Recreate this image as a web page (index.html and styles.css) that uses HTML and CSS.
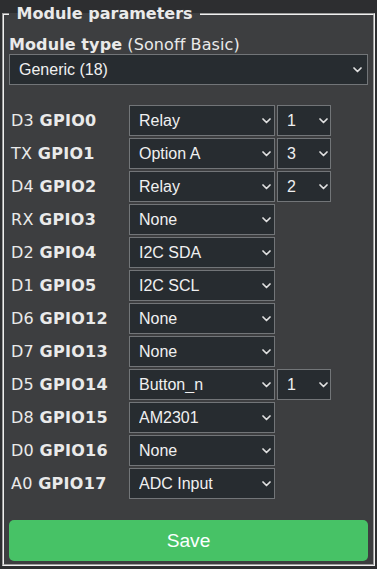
FILE: index.html
```html
<!DOCTYPE html>
<html>
<head>
<meta charset="utf-8">
<link rel="stylesheet" href="styles.css">
</head>
<body>
<div class="page">
  <fieldset class="panel">
    <legend class="panel-title"><b>&nbsp;Module parameters&nbsp;</b></legend>
    <div class="mtype"><b>Module type</b> (Sonoff Basic)</div>
    <div class="sel sel-full">
      <select class="field"><option>Generic (18)</option></select>
      <svg class="chev" width="9" height="6" viewBox="0 0 9 6"><path d="M1 1L4.5 4.5L8 1"/></svg>
    </div>
    <table class="gpio">
      <tr><td class="lbl">D3 <b>GPIO0</b></td><td class="c1"><div class="sel"><select class="field"><option>Relay</option></select><svg class="chev" width="9" height="6" viewBox="0 0 9 6"><path d="M1 1L4.5 4.5L8 1"/></svg></div></td><td class="c2"><div class="sel sel-small"><select class="field"><option>1</option></select><svg class="chev" width="9" height="6" viewBox="0 0 9 6"><path d="M1 1L4.5 4.5L8 1"/></svg></div></td></tr>
      <tr><td class="lbl">TX <b>GPIO1</b></td><td class="c1"><div class="sel"><select class="field"><option>Option A</option></select><svg class="chev" width="9" height="6" viewBox="0 0 9 6"><path d="M1 1L4.5 4.5L8 1"/></svg></div></td><td class="c2"><div class="sel sel-small"><select class="field"><option>3</option></select><svg class="chev" width="9" height="6" viewBox="0 0 9 6"><path d="M1 1L4.5 4.5L8 1"/></svg></div></td></tr>
      <tr><td class="lbl">D4 <b>GPIO2</b></td><td class="c1"><div class="sel"><select class="field"><option>Relay</option></select><svg class="chev" width="9" height="6" viewBox="0 0 9 6"><path d="M1 1L4.5 4.5L8 1"/></svg></div></td><td class="c2"><div class="sel sel-small"><select class="field"><option>2</option></select><svg class="chev" width="9" height="6" viewBox="0 0 9 6"><path d="M1 1L4.5 4.5L8 1"/></svg></div></td></tr>
      <tr><td class="lbl">RX <b>GPIO3</b></td><td class="c1"><div class="sel"><select class="field"><option>None</option></select><svg class="chev" width="9" height="6" viewBox="0 0 9 6"><path d="M1 1L4.5 4.5L8 1"/></svg></div></td><td class="c2"></td></tr>
      <tr><td class="lbl">D2 <b>GPIO4</b></td><td class="c1"><div class="sel"><select class="field"><option>I2C SDA</option></select><svg class="chev" width="9" height="6" viewBox="0 0 9 6"><path d="M1 1L4.5 4.5L8 1"/></svg></div></td><td class="c2"></td></tr>
      <tr><td class="lbl">D1 <b>GPIO5</b></td><td class="c1"><div class="sel"><select class="field"><option>I2C SCL</option></select><svg class="chev" width="9" height="6" viewBox="0 0 9 6"><path d="M1 1L4.5 4.5L8 1"/></svg></div></td><td class="c2"></td></tr>
      <tr><td class="lbl">D6 <b>GPIO12</b></td><td class="c1"><div class="sel"><select class="field"><option>None</option></select><svg class="chev" width="9" height="6" viewBox="0 0 9 6"><path d="M1 1L4.5 4.5L8 1"/></svg></div></td><td class="c2"></td></tr>
      <tr><td class="lbl">D7 <b>GPIO13</b></td><td class="c1"><div class="sel"><select class="field"><option>None</option></select><svg class="chev" width="9" height="6" viewBox="0 0 9 6"><path d="M1 1L4.5 4.5L8 1"/></svg></div></td><td class="c2"></td></tr>
      <tr><td class="lbl">D5 <b>GPIO14</b></td><td class="c1"><div class="sel"><select class="field"><option>Button_n</option></select><svg class="chev" width="9" height="6" viewBox="0 0 9 6"><path d="M1 1L4.5 4.5L8 1"/></svg></div></td><td class="c2"><div class="sel sel-small"><select class="field"><option>1</option></select><svg class="chev" width="9" height="6" viewBox="0 0 9 6"><path d="M1 1L4.5 4.5L8 1"/></svg></div></td></tr>
      <tr><td class="lbl">D8 <b>GPIO15</b></td><td class="c1"><div class="sel"><select class="field"><option>AM2301</option></select><svg class="chev" width="9" height="6" viewBox="0 0 9 6"><path d="M1 1L4.5 4.5L8 1"/></svg></div></td><td class="c2"></td></tr>
      <tr><td class="lbl">D0 <b>GPIO16</b></td><td class="c1"><div class="sel"><select class="field"><option>None</option></select><svg class="chev" width="9" height="6" viewBox="0 0 9 6"><path d="M1 1L4.5 4.5L8 1"/></svg></div></td><td class="c2"></td></tr>
      <tr><td class="lbl">A0 <b>GPIO17</b></td><td class="c1"><div class="sel"><select class="field"><option>ADC Input</option></select><svg class="chev" width="9" height="6" viewBox="0 0 9 6"><path d="M1 1L4.5 4.5L8 1"/></svg></div></td><td class="c2"></td></tr>
    </table>
    <button class="save">Save</button>
  </fieldset>
</div>
</body>
</html>
```

FILE: styles.css
```css
html, body {
  margin: 0;
  padding: 0;
  background: #2d2e30;
}
body {
  font-family: "DejaVu Sans", Verdana, sans-serif;
  font-size: 16px;
  color: #eaeaea;
}
.page {
  padding-top: 4px;
}
.panel {
  margin: 0 2px;
  padding: 0 5px 3px;
  border: 2px groove #f0f0f0;
  background: #3d3e40;
}
.panel-title {
  padding: 0 2px;
  line-height: 19px;
  color: #eaeaea;
}
.mtype {
  margin-top: 12px;
  line-height: 19px;
  letter-spacing: 0.1px;
}
.sel {
  position: relative;
  height: 31px;
}
.field {
  display: block;
  -webkit-appearance: none;
  appearance: none;
  box-sizing: border-box;
  width: 100%;
  height: 31px;
  margin: 0;
  padding: 0 0 0 9px;
  border: 1px solid #727578;
  border-radius: 0;
  background: #272c30;
  color: #f0f0f0;
  font-family: "Liberation Sans", Arial, sans-serif;
  font-size: 16px;
  outline: none;
}
.chev {
  position: absolute;
  top: 50%;
  right: 4px;
  margin-top: -3px;
  fill: none;
  stroke: #e0e0e0;
  stroke-width: 1.7;
  stroke-linecap: round;
  stroke-linejoin: round;
}
.sel-full .chev {
  right: 6px;
}
.sel-small .chev {
  right: 3px;
}
.gpio {
  margin-top: 18px;
  border-collapse: separate;
  border-spacing: 2px;
  margin-left: 0;
}
.gpio td {
  padding: 0;
  vertical-align: middle;
}
.lbl {
  width: 116px;
  white-space: nowrap;
  letter-spacing: 0.3px;
}
.c1 {
  width: 146px;
}
.c2 {
  width: 54px;
}
.save {
  display: block;
  width: 100%;
  height: 41px;
  margin-top: 19px;
  border: 0;
  border-radius: 5px;
  background: #47c266;
  color: #faffff;
  font-family: "Liberation Sans", Arial, sans-serif;
  font-size: 19.2px;
  padding: 0;
}
```
